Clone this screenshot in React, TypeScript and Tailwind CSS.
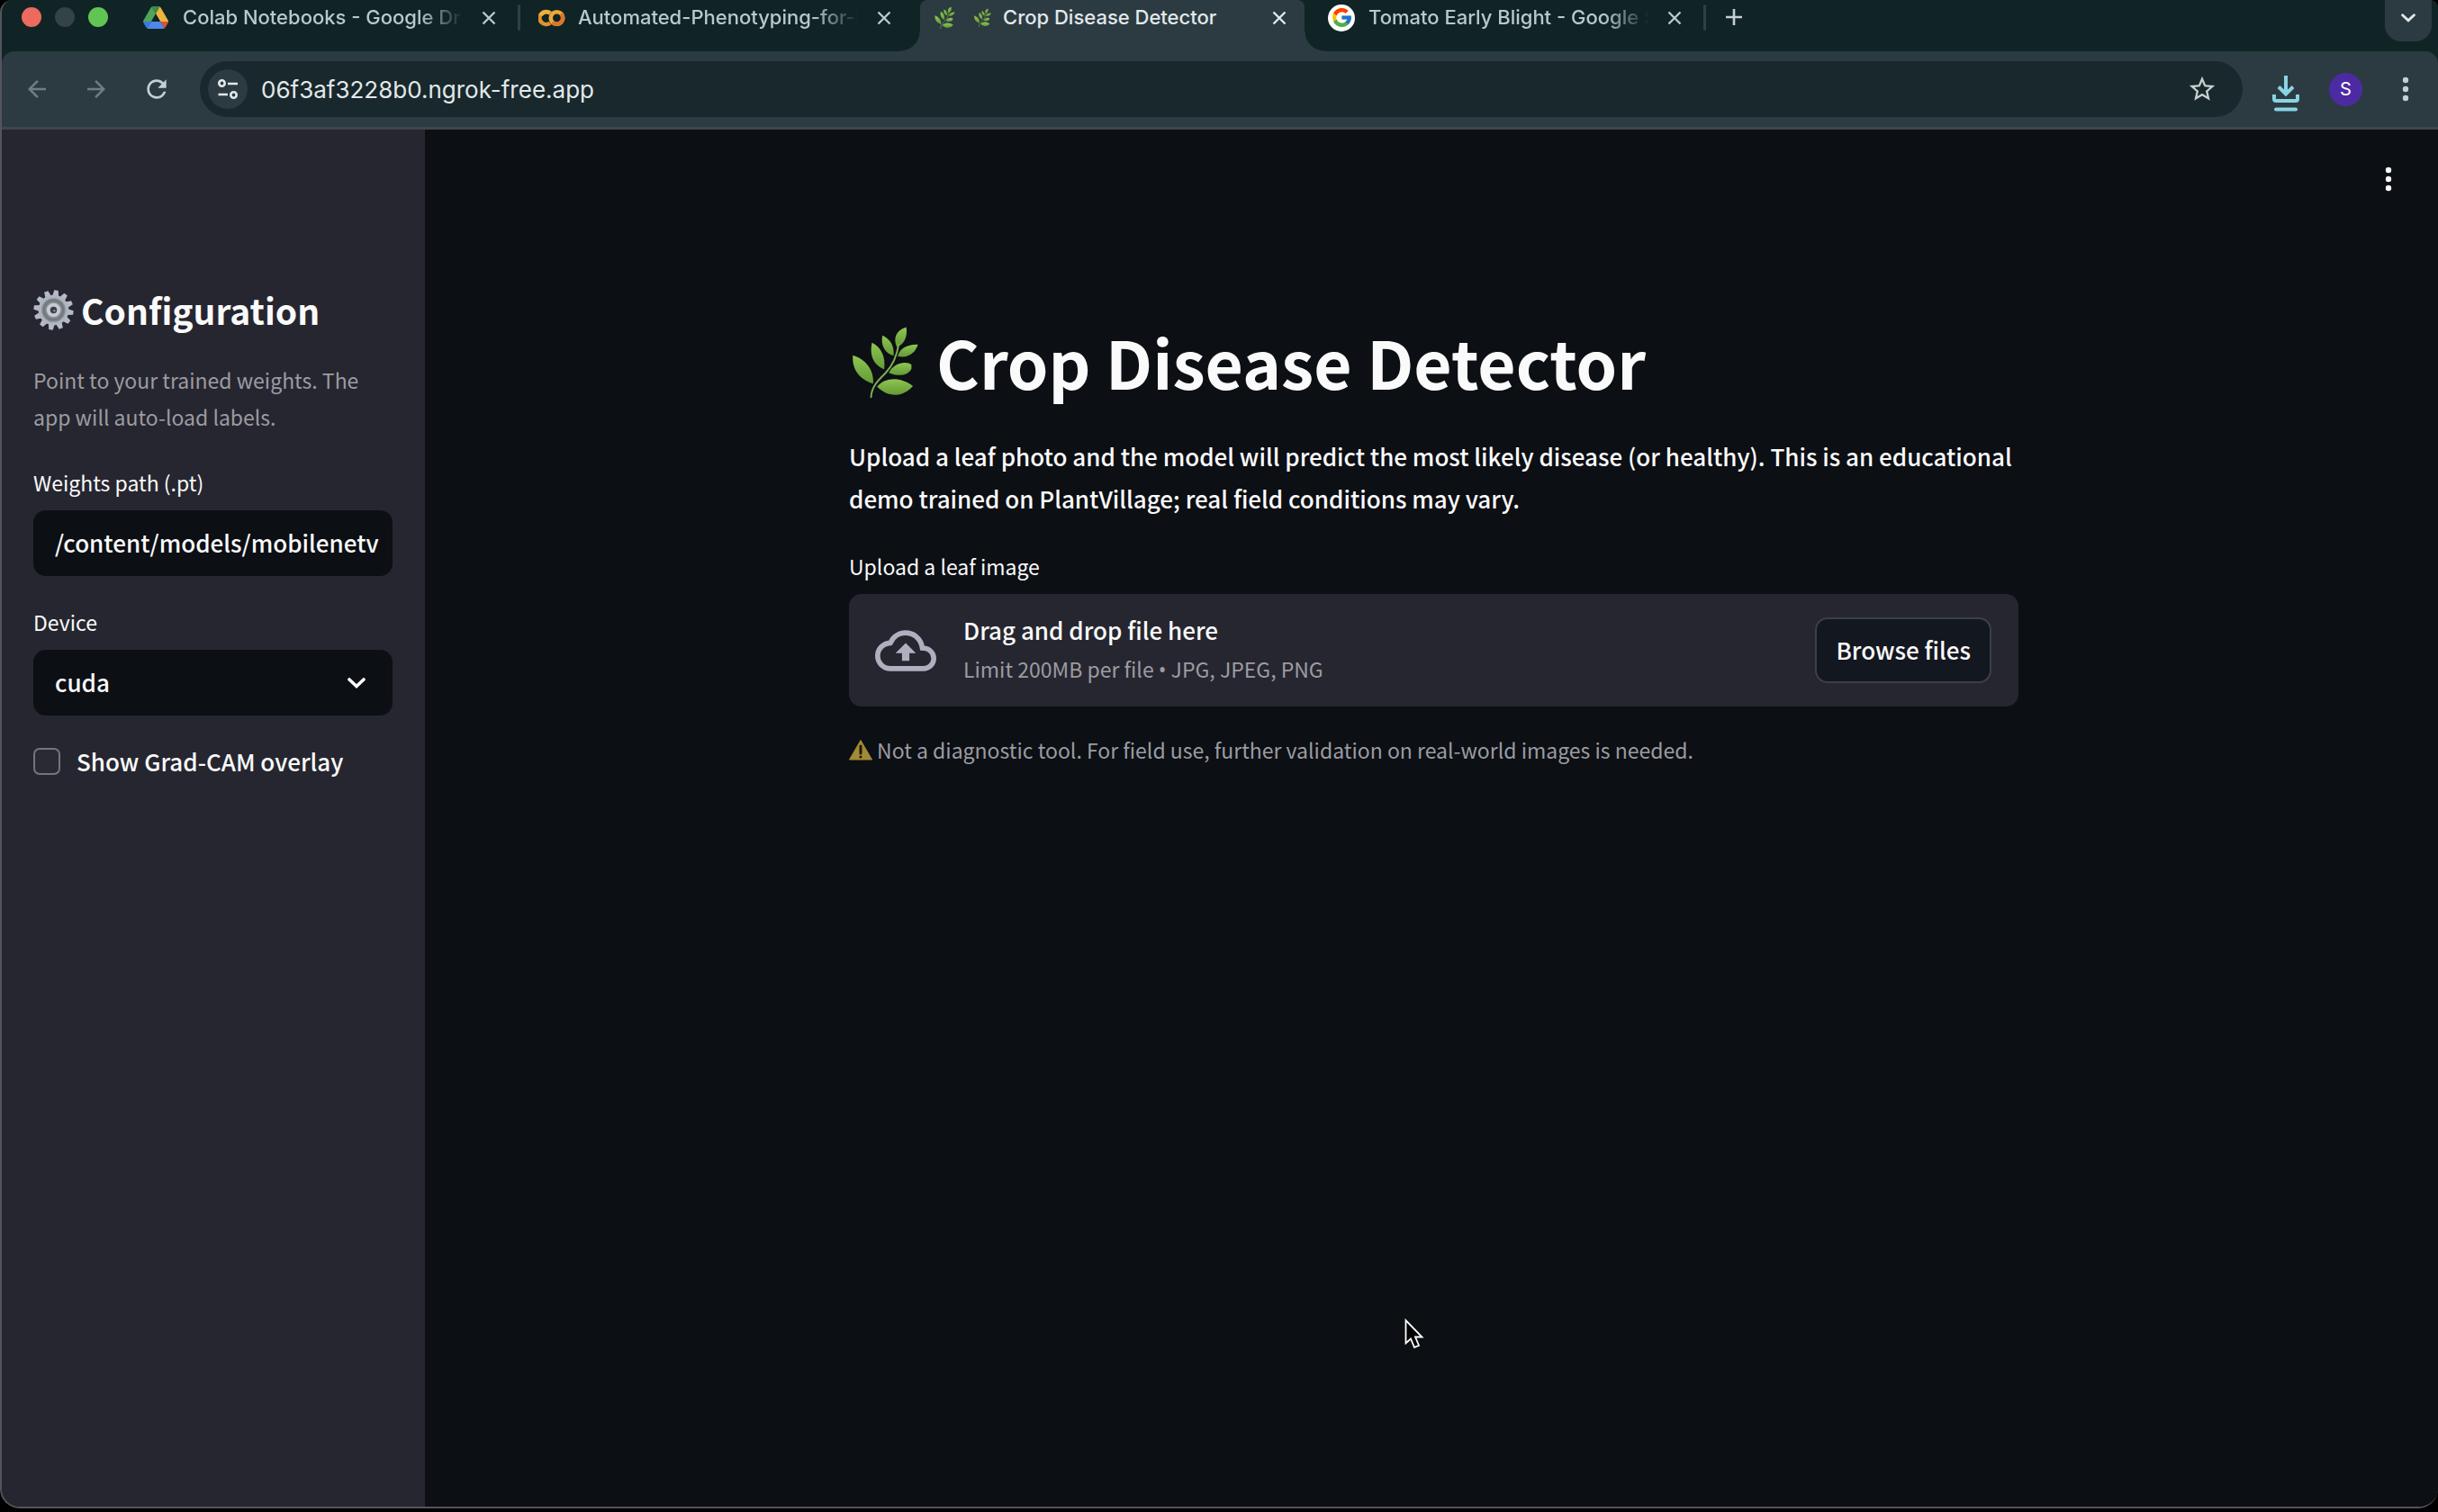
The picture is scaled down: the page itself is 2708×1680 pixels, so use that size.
import React, { useState } from "react";
import { FcGoogle } from "react-icons/fc";
import { MdArrowBack, MdArrowForward, MdOutlineCloudUpload, MdRefresh, MdStarBorder } from "react-icons/md";

function Leaf({ className }: { className: string }) {
  return (
    <svg viewBox="75 62 232 246" className={className} aria-hidden="true">
      <defs>
        <linearGradient id="leafFill" x1="0" y1="0" x2="0" y2="1">
          <stop offset="0" stopColor="#8fc653" />
          <stop offset="1" stopColor="#639a35" />
        </linearGradient>
      </defs>
      <g fill="url(#leafFill)">
        <path d="M82 163C112 172 153 200 150 258C108 245 78 215 82 163Z" />
        <path d="M146 121C175 135 192 165 187 210C153 198 136 165 146 121Z" />
        <path d="M181 97C205 108 222 130 218 165C190 157 174 130 181 97Z" />
        <path d="M261 69C265 100 256 125 229 136C216 106 226 80 261 69Z" />
        <path d="M300 127C290 157 265 173 232 167C240 138 265 127 300 127Z" />
        <path d="M278 208C265 234 230 234 202 222C218 188 262 180 278 195Z" />
        <path d="M283 266C250 303 200 307 163 268C190 236 240 234 283 266Z" />
      </g>
      <path d="M143 303C144 268 168 246 192 222C214 198 228 172 235 128" fill="none" stroke="#7fae55" strokeWidth="6" strokeLinecap="round" />
    </svg>
  );
}

function Gear({ className }: { className: string }) {
  const teeth = Array.from({ length: 12 }, (_, i) => i * 30 + 8);
  return (
    <svg viewBox="-22 -22 44 44" className={className} aria-hidden="true">
      <g fill="#b4bac6">
        {teeth.map((angle) => (
          <path key={angle} d="M-3.4 -15L-2.2 -21.6H2.2L3.4 -15Z" transform={`rotate(${angle})`} />
        ))}
      </g>
      <circle r="16.5" fill="#aeb5bf" />
      <circle r="13" fill="#858a8e" />
      <circle r="10.5" fill="none" stroke="#70757a" strokeWidth="1.5" />
      <circle r="7.6" fill="#c3cad4" />
      <circle r="3.6" fill="#3b3d40" />
      <circle cx="0.8" cy="0.8" r="1.4" fill="#8a8378" />
    </svg>
  );
}

function Drive() {
  return (
    <svg viewBox="0 0 87 78" className="h-[25px] w-[28px]" aria-hidden="true">
      <path d="M6.6 66.9l3.8 6.6c.8 1.4 2 2.5 3.3 3.3L27.5 53H0c0 1.6.4 3.1 1.2 4.5z" fill="#3f78dc" />
      <path d="M43.6 25L29.9 1.2c-1.4.8-2.5 1.9-3.3 3.3L1.2 48.5A9 9 0 0 0 0 53h27.5z" fill="#4fa35c" />
      <path d="M73.5 76.8c1.4-.8 2.5-1.9 3.3-3.3l9.2-16c.8-1.4 1.2-3 1.2-4.5H59.8l5.8 11.5z" fill="#d9503f" />
      <path d="M43.6 25L57.4 1.2C56 .4 54.5 0 52.9 0H34.4c-1.6 0-3.2.4-4.5 1.2z" fill="#3d8a4a" />
      <path d="M59.8 53H27.5L13.7 76.8c1.4.8 3 1.2 4.6 1.2h50.7c1.6 0 3.1-.4 4.5-1.2z" fill="#5087ec" />
      <path d="M73.4 26.5L60.7 4.5c-.8-1.4-2-2.5-3.3-3.3L43.6 25l16.2 28h27.4c0-1.5-.4-3.1-1.2-4.5z" fill="#ecb43c" />
    </svg>
  );
}

function Colab() {
  return (
    <svg viewBox="0 0 30 20" className="h-5 w-[30px]" fill="none" strokeWidth="4.6" aria-hidden="true">
      <path d="M13 4.6A7 7 0 1 0 13 15.4" stroke="#e0922c" />
      <path d="M13 4.6A7 7 0 0 0 2.6 7" stroke="#efb13c" />
      <circle cx="20.5" cy="10" r="6.8" stroke="#ecaa3a" />
      <path d="M25.3 5.2A6.8 6.8 0 0 1 15.7 14.8" stroke="#d9762c" />
    </svg>
  );
}

function Cross() {
  return (
    <svg viewBox="0 0 16 16" className="size-4" fill="none" stroke="currentColor" strokeWidth="2.4" aria-hidden="true">
      <path d="M1.5 1.5L14.5 14.5M14.5 1.5L1.5 14.5" />
    </svg>
  );
}

function Chevron({ className }: { className: string }) {
  return (
    <svg viewBox="0 0 20 12" className={className} fill="none" stroke="currentColor" strokeWidth="3.6" aria-hidden="true">
      <path d="M2 2L10 9.5L18 2" strokeLinecap="round" />
    </svg>
  );
}

function Dots({ className }: { className: string }) {
  return (
    <svg viewBox="0 0 8 28" className={className} fill="currentColor" aria-hidden="true">
      <circle cx="4" cy="4" r="3.2" />
      <circle cx="4" cy="14" r="3.2" />
      <circle cx="4" cy="24" r="3.2" />
    </svg>
  );
}

function Tab({ icon, title, divider, active }: { icon: React.ReactNode; title: string; divider?: boolean; active?: boolean }) {
  return (
    <div
      className={
        active
          ? "relative flex h-[57px] w-[439px] shrink-0 items-start pt-1 text-[#e3e8ea] before:absolute before:inset-y-0 before:right-[5px] before:left-[7px] before:rounded-t-lg before:bg-[#2c3b42]"
          : "relative flex h-[57px] w-[439px] shrink-0 items-start pt-1 text-[#b9c8cb]"
      }
    >
      {active && (
        <>
          <span className="absolute bottom-0 -left-[15px] size-[22px] bg-[radial-gradient(circle_at_top_left,transparent_21px,#2c3b42_22px)]" />
          <span className="absolute -right-[17px] bottom-0 size-[22px] bg-[radial-gradient(circle_at_top_right,transparent_21px,#2c3b42_22px)]" />
        </>
      )}
      <div className="relative flex h-[31px] w-full items-center pl-[22px]">
        <span className="flex w-[44px] shrink-0 items-center">{icon}</span>
        <a
          href="#tab"
          className={
            active
              ? "flex w-[310px] shrink-0 items-center gap-3 text-[22px] leading-[31px] font-medium whitespace-nowrap"
              : "w-[310px] shrink-0 text-[22px] leading-[31px] font-medium whitespace-nowrap [mask-image:linear-gradient(to_right,black_262px,transparent_312px)]"
          }
        >
          {active && <Leaf className="h-[21px] w-[21px]" />}
          {title}
        </a>
        <button type="button" aria-label={`Close ${title}`} className="ml-[18px] flex size-6 items-center justify-center">
          <Cross />
        </button>
        {divider && <span className="absolute top-px -right-[2px] h-[29px] w-[3px] rounded-sm bg-[#2f4146]" />}
      </div>
    </div>
  );
}

function TabStrip() {
  return (
    <div className="flex h-[57px] items-start overflow-hidden">
      <div className="flex w-[135px] shrink-0 gap-[15px] pt-2 pl-[22px]">
        <button type="button" aria-label="Close window" className="size-[22px] rounded-full bg-[#ed6a5e]" />
        <button type="button" aria-label="Minimize window" className="size-[22px] rounded-full bg-[#334348]" />
        <button type="button" aria-label="Zoom window" className="size-[22px] rounded-full bg-[#61c554]" />
      </div>
      <Tab icon={<Drive />} title="Colab Notebooks - Google Dr" divider />
      <Tab icon={<Colab />} title="Automated-Phenotyping-for-I" />
      <Tab icon={<Leaf className="h-[25px] w-[25px]" />} title="Crop Disease Detector" active />
      <Tab
        icon={
          <span className="-ml-px flex size-[30px] items-center justify-center rounded-full bg-white">
            <FcGoogle className="size-[25px]" />
          </span>
        }
        title="Tomato Early Blight - Google S"
        divider
      />
      <button type="button" aria-label="New tab" className="ml-[21px] flex h-[38px] w-6 items-center justify-center text-[#c3d0d3]">
        <svg viewBox="0 0 20 20" className="size-5" stroke="currentColor" strokeWidth="2.6" aria-hidden="true">
          <path d="M10 1V19M1 10H19" />
        </svg>
      </button>
      <button type="button" aria-label="Search tabs" className="mr-[7px] ml-auto flex h-[46px] w-[52px] items-start justify-center rounded-b-[18px] bg-[#2c3b42] pt-[15px] text-[#e3e8ea]">
        <Chevron className="h-[10px] w-4" />
      </button>
    </div>
  );
}

function Toolbar() {
  return (
    <div className="flex h-[87px] items-center rounded-t-[14px] border-b-3 border-[#414549] bg-[#2c3b42] pl-6">
      <div className="flex w-[196px] shrink-0 items-center gap-[36px]">
        <button type="button" aria-label="Back" className="text-[#6d7f85]">
          <MdArrowBack className="size-[30px]" />
        </button>
        <button type="button" aria-label="Forward" className="text-[#6d7f85]">
          <MdArrowForward className="size-[30px]" />
        </button>
        <button type="button" aria-label="Reload" className="text-[#c3d0d3]">
          <MdRefresh className="size-[32px]" />
        </button>
      </div>
      <div className="flex h-[62px] flex-1 items-center rounded-full bg-[#18282c] pr-[28px] pl-[9px]">
        <button type="button" aria-label="Site information" className="flex size-11 shrink-0 items-center justify-center rounded-full bg-[#2c3b42] text-[#e3e8ea]">
          <svg viewBox="0 0 24 24" className="size-6" fill="none" stroke="currentColor" strokeWidth="2.6" aria-hidden="true">
            <circle cx="5.5" cy="5.5" r="3.2" />
            <path d="M12 6H23M1.5 18H12" />
            <circle cx="18.5" cy="18.5" r="3.2" />
          </svg>
        </button>
        <input
          aria-label="Address"
          defaultValue="06f3af3228b0.ngrok-free.app"
          className="ml-[15px] h-11 min-w-0 flex-1 bg-transparent text-[26px] text-[#e3e8ea] outline-none"
        />
        <button type="button" aria-label="Bookmark this tab" className="text-[#c9cfd1]">
          <MdStarBorder className="size-[34px]" />
        </button>
      </div>
      <button type="button" aria-label="Downloads" className="mt-[9px] ml-[32px] text-[#8ad4e2]">
        <svg viewBox="0 0 32 40" className="h-10 w-8" fill="none" stroke="currentColor" strokeWidth="4" aria-hidden="true">
          <path d="M16 0V20M8 12.5L16 20.5L24 12.5" />
          <path d="M3 21V26Q3 28 5 28H27Q29 28 29 26V21" />
          <path d="M5 37.5H27" strokeLinecap="round" />
        </svg>
      </button>
      <button type="button" aria-label="Profile" className="ml-8 flex size-[37px] items-center justify-center rounded-full bg-[#4c2ba2] text-[20px] text-white">
        S
      </button>
      <button type="button" aria-label="Browser menu" className="mr-[32px] ml-[44px] text-[#c3d0d3]">
        <Dots className="h-7 w-2" />
      </button>
    </div>
  );
}

function Sidebar() {
  const [overlay, setOverlay] = useState(false);
  return (
    <aside className="w-[470px] shrink-0 bg-[#262630] pt-[172px] pr-9 pl-[35px]">
      <h2 className="flex items-center gap-2 text-[39px] leading-[56px] font-bold">
        <Gear className="size-[45px]" />
        Configuration
      </h2>
      <p className="mt-[30px] text-[23px] leading-[41px] text-[#9b9ca1]">Point to your trained weights. The app will auto-load labels.</p>
      <label htmlFor="weights" className="mt-[34px] block text-[23px] leading-[36px]">
        Weights path (.pt)
      </label>
      <input
        id="weights"
        defaultValue="/content/models/mobilenetv"
        className="mt-[13px] block h-[73px] w-full rounded-[14px] bg-[#0c0f14] pr-3 pb-[2px] pl-6 text-[26px] font-medium outline-none"
      />
      <label htmlFor="device" className="mt-[33px] block text-[23px] leading-[36px]">
        Device
      </label>
      <div className="relative mt-[13px]">
        <select id="device" className="block h-[73px] w-full appearance-none rounded-[14px] bg-[#0c0f14] px-6 pb-[2px] text-[26px] font-medium outline-none">
          <option>cuda</option>
          <option>cpu</option>
        </select>
        <Chevron className="pointer-events-none absolute top-[31px] right-[30px] h-3 w-5" />
      </div>
      <label className="mt-[31px] flex items-center gap-[18px] text-[26px] leading-[40px] font-medium">
        <input
          type="checkbox"
          checked={overlay}
          onChange={(e) => setOverlay(e.target.checked)}
          className="size-[30px] appearance-none rounded-[7px] border-2 border-[#75757e] bg-[#2a2a34] checked:bg-[#ff4b4b]"
        />
        Show Grad-CAM overlay
      </label>
    </aside>
  );
}

function Detector() {
  return (
    <main className="relative flex-1 bg-[#0c0f14] pt-[211px] pl-[5px]">
      <button type="button" aria-label="App menu" className="absolute top-[41px] right-[51px]">
        <Dots className="h-7 w-2" />
      </button>
      <div className="mx-auto max-w-[1299px]">
        <h1 className="flex items-center gap-[18px] text-[73px] leading-[93px] font-bold">
          <Leaf className="ml-[2px] h-[82px] w-[77px]" />
          Crop Disease Detector
        </h1>
        <p className="mt-[35px] text-[26px] leading-[47px] font-medium">
          Upload a leaf photo and the model will predict the most likely disease (or healthy). This is an educational demo trained on PlantVillage; real field conditions may vary.
        </p>
        <p id="upload-label" className="mt-[34px] text-[23px] leading-[36px]">
          Upload a leaf image
        </p>
        <section aria-labelledby="upload-label" className="mt-[13px] flex h-[125px] items-center rounded-[14px] bg-[#262630] pr-[30px] pl-[29px]">
          <MdOutlineCloudUpload className="size-[68px] shrink-0 text-[#aeb0c0]" />
          <div className="ml-[30px] flex-1 pb-[2px]">
            <p className="text-[26px] leading-[44px] font-medium">Drag and drop file here</p>
            <p className="text-[23px] leading-[42px] text-[#9b9ca1]">
              Limit 200MB per file <span className="font-['Noto_Sans']">•</span> JPG, JPEG, PNG
            </p>
          </div>
          <button type="button" className="h-[73px] rounded-[14px] border-2 border-[#3d3f47] bg-[#131720] px-[21px] pb-[2px] text-[26px] font-medium">
            Browse files
          </button>
        </section>
        <p className="mt-7 flex items-center gap-[5px] text-[23px] leading-[40px] text-[#9b9ca1]">
          <svg viewBox="0 0 26 24" className="h-6 w-[26px]" aria-hidden="true">
            <path d="M13 1.5L25.5 23H0.5Z" fill="#a38a35" stroke="#a38a35" strokeLinejoin="round" />
            <path d="M13 8V16" stroke="#1c1a10" strokeWidth="3" strokeLinecap="round" />
            <circle cx="13" cy="20" r="1.6" fill="#1c1a10" />
          </svg>
          Not a diagnostic tool. For field use, further validation on real-world images is needed.
        </p>
      </div>
      <svg viewBox="0 0 22 34" className="pointer-events-none absolute top-[1321px] left-[1088px] h-[34px] w-[22px]" aria-hidden="true">
        <path d="M1.5 2V27.5L7 22.5L11 32L16 30L12 20.5H19.5Z" fill="#000" stroke="#fff" strokeWidth="1.8" />
      </svg>
    </main>
  );
}

export default function App() {
  return (
    <div className="h-screen bg-black pb-1">
      <div className="flex h-full flex-col overflow-hidden rounded-tl-[14px] rounded-tr-[8px] rounded-b-[22px] border-b-2 border-l-2 border-[#54555c] bg-[#102425] font-['Inter',sans-serif]">
        <TabStrip />
        <Toolbar />
        <div className="flex min-h-0 flex-1 font-['Noto_Sans_CJK_SC',sans-serif] text-[#fafafa]">
          <Sidebar />
          <Detector />
        </div>
      </div>
    </div>
  );
}
